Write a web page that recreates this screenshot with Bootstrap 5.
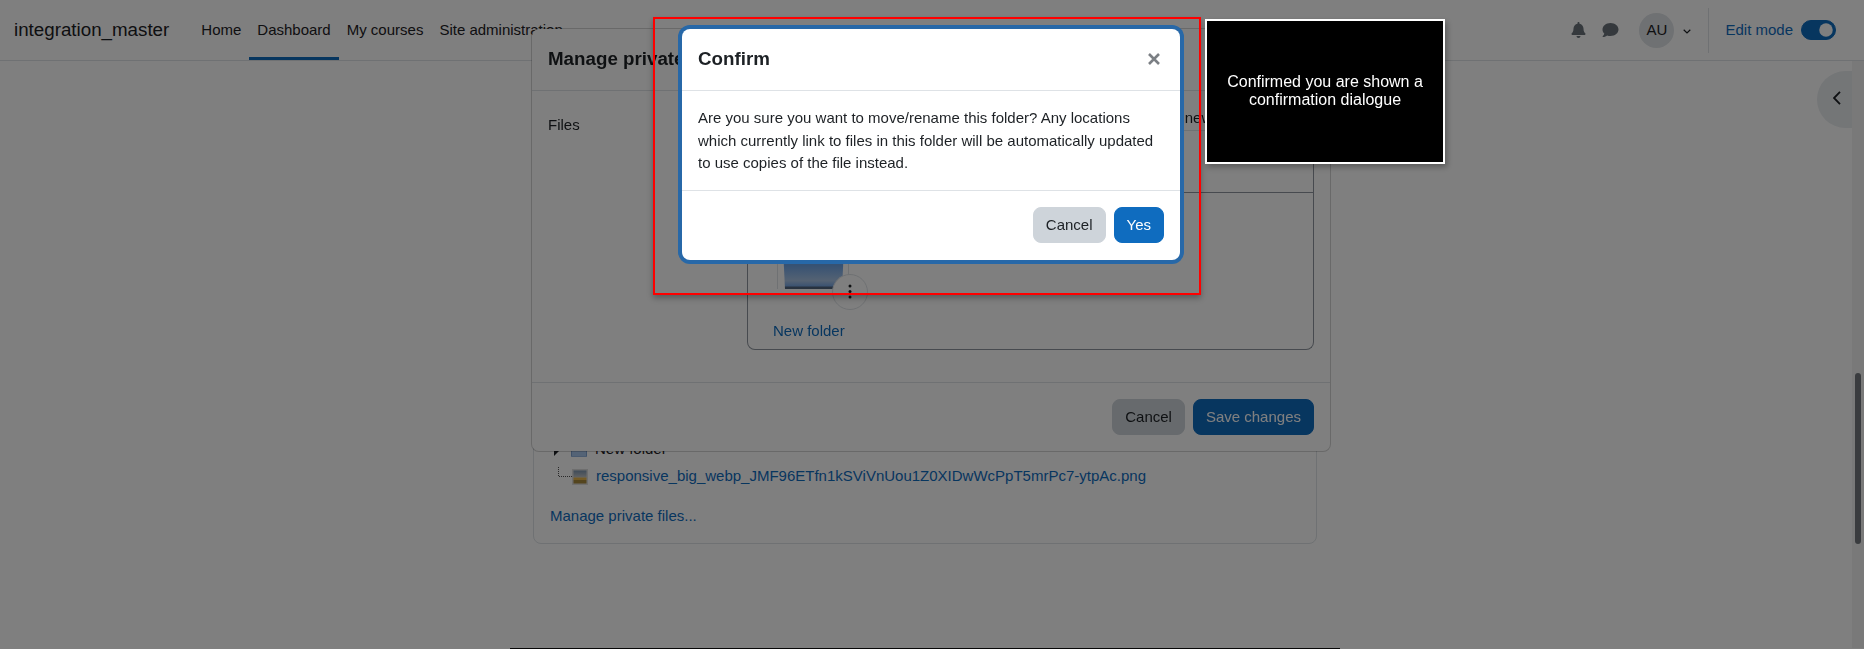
<!DOCTYPE html>
<html lang="en">
<head>
  <meta charset="UTF-8" />
  <meta name="viewport" content="width=device-width, initial-scale=1.0" />
  <title>Dashboard</title>
  <link href="https://cdn.jsdelivr.net/npm/bootstrap@5.3.3/dist/css/bootstrap.min.css" rel="stylesheet" />
  <style>
    body { font-family: "Liberation Sans", Arial, sans-serif; font-size: 15px; line-height: 1.5; color: #1d2125; height: 649px; overflow: hidden; }
    a { color: #0f6cbf; text-decoration: none; }

    /* top bar */
    .topbar { height: 61px; padding: 0 0 0 14px; border-bottom: 1px solid #dee2e6; flex-shrink: 0; }
    .brand-name { font-size: 18.75px; color: #1d2125; margin-right: 24px; }
    .topbar .nav-link { height: 60px; padding: 0 8px; display: flex; align-items: center; color: #1d2125; font-size: 15px; border-bottom: 3px solid transparent; padding-top: 3px; }
    .topbar .nav-link.active { border-bottom-color: #0f6cbf; }
    .tool-bell { width: 15px; height: 16px; fill: #6a737b; }
    .tool-chat { width: 17px; height: 16px; fill: #6a737b; margin-left: 16px; }
    .avatar-circle { width: 35px; height: 35px; border-radius: 50%; background: #dee2e6; margin-left: 20px; }
    .avatar-caret { width: 8px; height: 5px; margin: 2px 0 0 9px; }
    .bar-divider { width: 1px; height: 45px; background: #dee2e6; margin: 0 16px 0 17px; }
    .edit-switch { padding: 0; margin: 0 28px 0 8px; min-height: 0; display: flex; }
    .edit-switch .form-check-input { width: 35px; height: 20px; margin: 0; background-color: #0f6cbf; border-color: #0f6cbf; float: none; }

    /* page content */
    .page-area { flex: 1 1 auto; min-height: 0; position: relative; }
    .files-card { width: 784px; height: 443px; margin: 40px 0 0 533px; border-color: #dee2e6; border-radius: 8px; padding: 0 16px 16px; }
    .tree-line { height: 27px; }
    .tree-folder { margin-left: 11px; }
    .tree-text { margin-left: 8px; }
    .manage-link { margin-top: 14.5px; }
    .page-foot { height: 1px; width: 830px; background: #111; flex-shrink: 0; margin-left: 510px; }

    .drawer-tab { position: absolute; right: 11px; top: 10px; width: 36px; height: 57px; background: #e9ecef; border-radius: 29px 0 0 29px; }
    .side-track { position: absolute; top: 0; right: 0; bottom: 0; width: 12px; background: #f3f3f3; }
    .side-thumb { position: absolute; top: 312px; left: 3px; width: 6px; height: 171px; background: #74797f; border-radius: 3px; }

    /* dialogs */
    .modal.stack-low { z-index: 1040; }
    .modal { padding-right: 2px; overflow: hidden; }
    .modal-backdrop.show { z-index: 1045; }
    .manage-dialog { width: 800px; max-width: 800px; margin: 28px auto 0; }
    .confirm-dialog { width: 498px; max-width: 498px; margin: 29px auto 0; }
    .modal-header { padding-bottom: 17px; }
    .modal-title { font-size: 18.75px; font-weight: 700; line-height: 1.5; color: #1d2125; }
    .modal-content { border-radius: 8px; }
    .confirm-box { border: 0; box-shadow: 0 0 0 4px #2768a8; }
    .confirm-box .modal-body { padding-bottom: 15px; }
    .confirm-box .modal-footer { padding-bottom: 13px; }
    .modal-footer .btn { font-size: 15px; padding: 6px 12px; border-radius: 8px; }
    .btn-grey { background: #ced4da; border-color: #ced4da; color: #1d2125; }
    .btn-blue { background: #0f6cbf; border-color: #0f6cbf; color: #fff; }
    .close-cross { width: 12px; height: 12px; }

    .form-label-col { width: 199px; padding-top: 7px; flex-shrink: 0; }
    .file-box { border: 1px solid #8f959e; border-top-color: #dee2e6; border-radius: 0 0 8px 8px; height: 220px; margin-bottom: 16px; }
    .file-tools { height: 62px; border-bottom: 1px solid #8f959e; }
    .file-list { padding-left: 25px; }
    .folder-tile { position: relative; width: 72px; height: 83px; margin: 13px 0 0 4px; border: 1px solid #dee2e6; border-width: 0 1px; }
    .folder-tile svg.big-folder { display: block; width: 65px; height: 83px; margin-left: 3px; }
    .tile-menu { position: absolute; left: 54px; top: 68px; width: 36px; height: 36px; border: 1px solid #dee2e6; border-radius: 50%; background: #fff; }
    .folder-link { margin-top: 31px; display: block; }

    /* tour highlight */
    .tour-frame { position: fixed; z-index: 1060; left: 653px; top: 17px; width: 548px; height: 278px; border: 2px solid #f00; box-shadow: 0 3px 6px rgba(0, 0, 0, .3); }
    .tour-note { position: fixed; z-index: 1061; left: 1205px; top: 19px; width: 240px; height: 145px; background: #000; border: 2px solid #fff; color: #fff; font-size: 16px; line-height: 18px; text-align: center; box-shadow: 2px 3px 6px rgba(0, 0, 0, .3); padding: 0 12px 2px; }
  </style>
</head>
<body class="d-flex flex-column">

  <!-- top bar -->
  <nav class="topbar d-flex align-items-center">
    <a class="brand-name" href="#">integration_master</a>
    <ul class="nav flex-nowrap">
      <li class="nav-item"><a class="nav-link" href="#">Home</a></li>
      <li class="nav-item"><a class="nav-link active" href="#">Dashboard</a></li>
      <li class="nav-item"><a class="nav-link" href="#">My courses</a></li>
      <li class="nav-item"><a class="nav-link" href="#">Site administration</a></li>
    </ul>
    <div class="ms-auto d-flex align-items-center">
      <svg class="tool-bell" viewBox="0 0 448 512"><path d="M224 512c35.32 0 63.97-28.65 63.97-64H160.03c0 35.35 28.65 64 63.97 64zm215.39-149.71c-19.32-20.76-55.47-51.99-55.47-154.29 0-77.7-54.48-139.9-127.94-155.16V32c0-17.67-14.32-32-31.98-32s-31.98 14.33-31.98 32v20.84C118.56 68.1 64.08 130.3 64.08 208c0 102.3-36.15 133.53-55.47 154.29-6 6.45-8.66 14.16-8.61 21.71.11 16.4 12.98 32 32.1 32h383.8c19.12 0 32-15.6 32.1-32 .05-7.55-2.61-15.27-8.61-21.71z"/></svg>
      <svg class="tool-chat" viewBox="0 0 512 512"><path d="M256 32C114.6 32 0 125.1 0 240c0 49.6 21.4 95 57 130.7C44.5 421.1 2.7 466 2.2 466.5c-2.2 2.3-2.8 5.7-1.5 8.7S4.8 480 8 480c66.3 0 116-31.8 140.6-51.4 32.7 12.3 69 19.4 107.4 19.4 141.4 0 256-93.1 256-208S397.4 32 256 32z"/></svg>
      <div class="avatar-circle d-flex align-items-center justify-content-center">AU</div>
      <svg class="avatar-caret" viewBox="0 0 8 5"><path d="M.7.8 4 4 7.3.8" fill="none" stroke="#1d2125" stroke-width="1.2"/></svg>
      <div class="bar-divider"></div>
      <a href="#">Edit mode</a>
      <div class="form-check form-switch edit-switch">
        <input class="form-check-input" type="checkbox" role="switch" checked />
      </div>
    </div>
  </nav>

  <!-- page behind the dialogs -->
  <main class="page-area">
    <div class="card files-card justify-content-end">
      <div class="tree-line d-flex align-items-center">
        <svg width="6" height="12" viewBox="0 0 6 12" class="ms-1"><path d="M0 0 6 6 0 12z" fill="#1d2125"/></svg>
        <svg class="tree-folder" width="16" height="14" viewBox="0 0 16 14"><path d="M.5 1h5l1 1h9v11a1 1 0 0 1-1 1H1.500a1 1 0 0 1-1-1z" fill="#a9c6ec" stroke="#7fa3d3"/></svg>
        <span class="tree-text">New folder</span>
      </div>
      <div class="tree-line d-flex align-items-center">
        <svg width="14" height="12" viewBox="0 0 14 12" class="ms-2 mb-2 flex-shrink-0"><path d="M.5 0v9.500H14" fill="none" stroke="#555" stroke-dasharray="1 1"/></svg>
        <svg class="flex-shrink-0" width="16" height="16" viewBox="0 0 16 16">
          <defs>
            <linearGradient id="skyFill" x1="0" y1="0" x2="0" y2="1">
              <stop offset="0" stop-color="#7f97b2"/>
              <stop offset="1" stop-color="#c6c8c8"/>
            </linearGradient>
          </defs>
          <rect width="16" height="16" fill="#dcdcdc"/>
          <rect x="1.500" y="1.500" width="13" height="7" fill="url(#skyFill)"/>
          <rect x="1.500" y="8.500" width="13" height="2.500" fill="#e8b64c"/>
          <rect x="1.500" y="11" width="13" height="3.500" fill="#a88a3c"/>
        </svg>
        <a class="tree-text" href="#">responsive_big_webp_JMF96ETfn1kSViVnUou1Z0XIDwWcPpT5mrPc7-ytpAc.png</a>
      </div>
      <a class="manage-link" href="#">Manage private files...</a>
    </div>
    <div class="drawer-tab d-flex align-items-center justify-content-center">
      <svg class="ms-1 mb-1" width="8" height="14" viewBox="0 0 8 14"><path d="M7 .8 1 7l6 6.200" fill="none" stroke="#1d2125" stroke-width="1.800"/></svg>
    </div>
    <div class="side-track"><div class="side-thumb"></div></div>
  </main>
  <div class="page-foot"></div>

  <!-- manage private files dialog -->
  <div class="modal d-block stack-low">
    <div class="modal-dialog manage-dialog">
      <div class="modal-content">
        <div class="modal-header">
          <h5 class="modal-title">Manage private files</h5>
        </div>
        <div class="modal-body d-flex">
          <div class="form-label-col">Files</div>
          <div class="flex-grow-1">
            <div class="text-end">Maximum size for new files: Unlimited</div>
            <div class="file-box">
              <div class="file-tools"></div>
              <div class="file-list">
                <div class="folder-tile">
                  <svg class="big-folder" viewBox="0 0 65 83">
                    <defs>
                      <linearGradient id="folderFill" x1="0" y1="0" x2="0" y2="1">
                        <stop offset="0" stop-color="#5a9ae8"/>
                        <stop offset=".72" stop-color="#6fa5e6"/>
                        <stop offset=".9" stop-color="#aac5e6"/>
                        <stop offset=".965" stop-color="#78a6e2"/>
                        <stop offset=".975" stop-color="#50647f"/>
                        <stop offset="1" stop-color="#50647f"/>
                      </linearGradient>
                    </defs>
                    <path d="M0 0H65L61 83H4z" fill="url(#folderFill)"/>
                  </svg>
                  <div class="tile-menu d-flex align-items-center justify-content-center">
                    <svg width="4" height="15" viewBox="0 0 4 15"><circle cx="2" cy="2" r="1.500" fill="#1d2125"/><circle cx="2" cy="7.500" r="1.500" fill="#1d2125"/><circle cx="2" cy="13" r="1.500" fill="#1d2125"/></svg>
                  </div>
                </div>
                <a class="folder-link" href="#">New folder</a>
              </div>
            </div>
          </div>
        </div>
        <div class="modal-footer">
          <button class="btn btn-grey" type="button">Cancel</button>
          <button class="btn btn-blue" type="button">Save changes</button>
        </div>
      </div>
    </div>
  </div>

  <div class="modal-backdrop show"></div>

  <!-- confirm dialog -->
  <div class="modal d-block">
    <div class="modal-dialog confirm-dialog">
      <div class="modal-content confirm-box">
        <div class="modal-header">
          <h5 class="modal-title">Confirm</h5>
          <svg class="close-cross ms-auto me-1" viewBox="0 0 12 12"><path d="M1 1 11 11M11 1 1 11" stroke="#7b7f84" stroke-width="2.600" fill="none"/></svg>
        </div>
        <div class="modal-body">Are you sure you want to move/rename this folder? Any locations which currently link to files in this folder will be automatically updated to use copies of the file instead.</div>
        <div class="modal-footer">
          <button class="btn btn-grey" type="button">Cancel</button>
          <button class="btn btn-blue" type="button">Yes</button>
        </div>
      </div>
    </div>
  </div>

  <!-- tour step -->
  <div class="tour-frame"></div>
  <div class="tour-note d-flex align-items-center justify-content-center">Confirmed you are shown a confirmation dialogue</div>

  <script src="https://cdn.jsdelivr.net/npm/bootstrap@5.3.3/dist/js/bootstrap.bundle.min.js"></script>
</body>
</html>
